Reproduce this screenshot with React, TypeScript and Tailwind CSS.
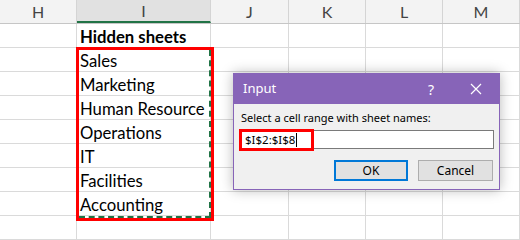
const COLS = [
  { key: "H", w: "w-[77px]" },
  { key: "I", w: "w-[134px]" },
  { key: "J", w: "w-[78px]" },
  { key: "K", w: "w-[77px]" },
  { key: "L", w: "w-[77px]" },
  { key: "M", w: "flex-1" },
];

const ROWS = [
  "Hidden sheets",
  "Sales",
  "Marketing",
  "Human Resource",
  "Operations",
  "IT",
  "Facilities",
  "Accounting",
  "",
];

function HeaderRow() {
  return (
    <div className="flex h-[24px] bg-[#f3f3f3] border-b border-[#c6c6c6]">
      {COLS.map((c) => (
        <div
          key={c.key}
          className={`${c.w} flex items-center justify-center border-r border-[#d4d4d4] text-[16px] text-[#444] ${
            c.key === "I" ? "bg-[#e1e1e1] border-b-2 border-b-[#217346]" : ""
          }`}
        >
          {c.key}
        </div>
      ))}
    </div>
  );
}

function DataRow({ text, bold }: { text: string; bold: boolean }) {
  return (
    <div className="flex h-[24px] bg-white">
      {COLS.map((c) => (
        <div
          key={c.key}
          className={`${c.w} flex items-end pl-[3px] border-r border-b border-[#dadada] text-[16.7px] leading-[20px] text-black ${
            bold ? "font-bold" : ""
          }`}
        >
          {c.key === "I" ? text : ""}
        </div>
      ))}
    </div>
  );
}

function InputDialog() {
  return (
    <div className="absolute left-[233px] top-[73px] w-[267px] h-[117px] border border-[#8764b8] bg-[#f0f0f0] shadow-[0_0_12px_rgba(0,0,0,0.28)] font-['Noto_Sans',sans-serif]">
      <div className="flex h-[30px] items-center bg-[#8764b8] text-white">
        <span className="pl-[9px] text-[13px]">Input</span>
        <span className="ml-auto mr-[36px] text-[14px]">?</span>
        <svg width="12" height="12" viewBox="0 0 12 12" className="mr-[17px]">
          <path d="M1 1L11 11M11 1L1 11" stroke="white" strokeWidth="1.2" />
        </svg>
      </div>
      <div className="px-[5px] pt-[6px]">
        <div className="pl-[2px] text-[11px] leading-[16px] text-black">
          Select a cell range with sheet names:
        </div>
        <div className="mt-[4px] h-[19px] w-[255px] border border-[#7a7a7a] bg-white flex items-center">
          <div className="relative flex items-center h-[22px] w-[75px] -ml-[1px] border-[3px] border-[#ff0000] text-[11.5px] text-black pl-[3px]">
            $I$2:$I$8
            <span className="ml-[1px] h-[14px] w-px bg-black" />
          </div>
        </div>
        <div className="flex justify-end gap-[10px] mt-[11px] pr-[1px]">
          <button className="h-[21px] w-[74px] border-2 border-[#0078d7] bg-[#e1e1e1] text-[12px] text-black">
            OK
          </button>
          <button className="h-[21px] w-[75px] border border-[#adadad] bg-[#e1e1e1] text-[12px] text-black">
            Cancel
          </button>
        </div>
      </div>
    </div>
  );
}

export default function App() {
  return (
    <div className="relative w-[520px] h-[240px] overflow-hidden bg-white font-['Lato',sans-serif]">
      <HeaderRow />
      {ROWS.map((r, i) => (
        <DataRow key={i} text={r} bold={i === 0} />
      ))}
      {/* copy range marquee + highlight */}
      <div className="absolute left-[76px] top-[47px] w-[138px] h-[174px] border-[3px] border-[#ff0000] pointer-events-none">
        <div className="absolute right-0 top-0 bottom-0 border-r-2 border-dashed border-[#217346]" />
        <div className="absolute left-0 right-0 bottom-0 border-b-2 border-dashed border-[#217346]" />
      </div>
      <InputDialog />
    </div>
  );
}
